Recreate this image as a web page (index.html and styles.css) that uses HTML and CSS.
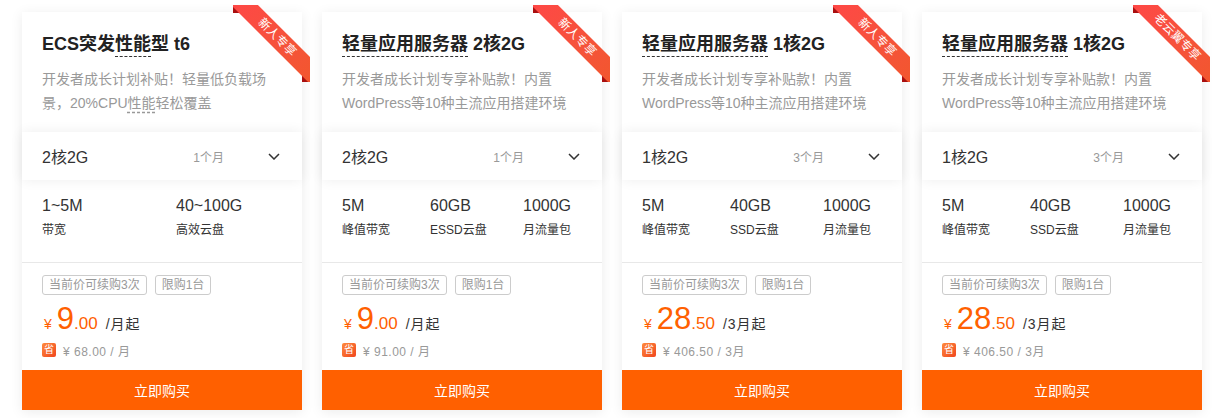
FILE: index.html
```html
<!DOCTYPE html>
<html lang="zh-CN">
<head>
<meta charset="utf-8">
<title>优惠产品</title>
<link rel="stylesheet" href="styles.css">
</head>
<body>
<div class="page">

  <div class="card">
    <div class="ribbon"><span class="fold fold-top"></span><span class="fold fold-bottom"></span><span class="band">新人专享</span></div>
    <div class="head">
      <h3 class="title">ECS突发<span class="dash">性能</span>型 t6</h3>
      <p class="desc">开发者成长计划补贴！轻量低负载场景，20%CPU<span class="dash-light">性能</span>轻松覆盖</p>
    </div>
    <div class="select">
      <span class="sel-name">2核2G</span>
      <span class="period">1个月</span>
      <svg class="chev" width="12" height="7" viewBox="0 0 12 7"><polyline points="1,1 6,6 11,1" fill="none" stroke="#333" stroke-width="1.5"/></svg>
    </div>
    <div class="specs specs-2">
      <div class="spec"><div class="val">1~5M</div><div class="lab">带宽</div></div>
      <div class="spec"><div class="val">40~100G</div><div class="lab">高效云盘</div></div>
    </div>
    <div class="buy">
      <div class="tags"><span class="tag">当前价可续购3次</span><span class="tag">限购1台</span></div>
      <div class="price"><span class="cur">¥</span><span class="int">9</span><span class="dec">.00</span><span class="unit">/月起</span></div>
      <div class="save"><span class="save-icon">省</span><span class="orig">¥ 68.00 / 月</span></div>
    </div>
    <button class="btn">立即购买</button>
  </div>

  <div class="card">
    <div class="ribbon"><span class="fold fold-top"></span><span class="fold fold-bottom"></span><span class="band">新人专享</span></div>
    <div class="head">
      <h3 class="title"><span class="dash">轻量应用服务器</span> 2核2G</h3>
      <p class="desc">开发者成长计划专享补贴款！内置WordPress等10种主流应用搭建环境</p>
    </div>
    <div class="select">
      <span class="sel-name">2核2G</span>
      <span class="period">1个月</span>
      <svg class="chev" width="12" height="7" viewBox="0 0 12 7"><polyline points="1,1 6,6 11,1" fill="none" stroke="#333" stroke-width="1.5"/></svg>
    </div>
    <div class="specs specs-3">
      <div class="spec"><div class="val">5M</div><div class="lab">峰值带宽</div></div>
      <div class="spec"><div class="val">60GB</div><div class="lab">ESSD云盘</div></div>
      <div class="spec"><div class="val">1000G</div><div class="lab">月流量包</div></div>
    </div>
    <div class="buy">
      <div class="tags"><span class="tag">当前价可续购3次</span><span class="tag">限购1台</span></div>
      <div class="price"><span class="cur">¥</span><span class="int">9</span><span class="dec">.00</span><span class="unit">/月起</span></div>
      <div class="save"><span class="save-icon">省</span><span class="orig">¥ 91.00 / 月</span></div>
    </div>
    <button class="btn">立即购买</button>
  </div>

  <div class="card">
    <div class="ribbon"><span class="fold fold-top"></span><span class="fold fold-bottom"></span><span class="band">新人专享</span></div>
    <div class="head">
      <h3 class="title"><span class="dash">轻量应用服务器</span> 1核2G</h3>
      <p class="desc">开发者成长计划专享补贴款！内置WordPress等10种主流应用搭建环境</p>
    </div>
    <div class="select">
      <span class="sel-name">1核2G</span>
      <span class="period">3个月</span>
      <svg class="chev" width="12" height="7" viewBox="0 0 12 7"><polyline points="1,1 6,6 11,1" fill="none" stroke="#333" stroke-width="1.5"/></svg>
    </div>
    <div class="specs specs-3">
      <div class="spec"><div class="val">5M</div><div class="lab">峰值带宽</div></div>
      <div class="spec"><div class="val">40GB</div><div class="lab">SSD云盘</div></div>
      <div class="spec"><div class="val">1000G</div><div class="lab">月流量包</div></div>
    </div>
    <div class="buy">
      <div class="tags"><span class="tag">当前价可续购3次</span><span class="tag">限购1台</span></div>
      <div class="price"><span class="cur">¥</span><span class="int">28</span><span class="dec">.50</span><span class="unit">/3月起</span></div>
      <div class="save"><span class="save-icon">省</span><span class="orig">¥ 406.50 / 3月</span></div>
    </div>
    <button class="btn">立即购买</button>
  </div>

  <div class="card">
    <div class="ribbon"><span class="fold fold-top"></span><span class="fold fold-bottom"></span><span class="band">老云翼专享</span></div>
    <div class="head">
      <h3 class="title"><span class="dash">轻量应用服务器</span> 1核2G</h3>
      <p class="desc">开发者成长计划专享补贴款！内置WordPress等10种主流应用搭建环境</p>
    </div>
    <div class="select">
      <span class="sel-name">1核2G</span>
      <span class="period">3个月</span>
      <svg class="chev" width="12" height="7" viewBox="0 0 12 7"><polyline points="1,1 6,6 11,1" fill="none" stroke="#333" stroke-width="1.5"/></svg>
    </div>
    <div class="specs specs-3">
      <div class="spec"><div class="val">5M</div><div class="lab">峰值带宽</div></div>
      <div class="spec"><div class="val">40GB</div><div class="lab">SSD云盘</div></div>
      <div class="spec"><div class="val">1000G</div><div class="lab">月流量包</div></div>
    </div>
    <div class="buy">
      <div class="tags"><span class="tag">当前价可续购3次</span><span class="tag">限购1台</span></div>
      <div class="price"><span class="cur">¥</span><span class="int">28</span><span class="dec">.50</span><span class="unit">/3月起</span></div>
      <div class="save"><span class="save-icon">省</span><span class="orig">¥ 406.50 / 3月</span></div>
    </div>
    <button class="btn">立即购买</button>
  </div>

</div>
</body>
</html>
```
FILE: styles.css
```css
* { box-sizing: border-box; }

html, body {
  margin: 0;
  background: #fff;
}

body {
  font-family: "Liberation Sans", "Noto Sans CJK SC", sans-serif;
  color: #333;
}

.page {
  display: flex;
  gap: 20px;
  padding: 12px 22px 8px;
}

.card {
  position: relative;
  width: 280px;
  flex: none;
  background: #fff;
  box-shadow: 0 2px 12px rgba(0, 0, 0, 0.08);
  display: flex;
  flex-direction: column;
}

/* ribbon */
.ribbon {
  position: absolute;
  top: -7px;
  right: -8px;
  width: 77px;
  height: 77px;
  overflow: hidden;
  z-index: 2;
}

.fold {
  position: absolute;
  width: 0;
  height: 0;
  border-left: 8px solid #a90f0f;
  border-top: 8px solid transparent;
}

.fold-top { left: 0; top: 0; }
.fold-bottom { left: 69px; top: 69px; }

.band {
  position: absolute;
  left: -17px;
  top: 23px;
  width: 122px;
  height: 19px;
  line-height: 19px;
  text-align: center;
  font-size: 12px;
  color: #fff;
  background: linear-gradient(to right, #ff4747, #f5533a 60%, #f2572c);
  transform: rotate(45deg);
}

/* header */
.head {
  height: 120px;
  padding: 20px 20px 0;
}

.title {
  margin: 0;
  font-size: 18px;
  line-height: 24px;
  font-weight: 600;
  color: #222;
}

.dash {
  padding-bottom: 2px;
  border-bottom: 1px dashed #333;
}

.desc {
  margin: 11px 0 0;
  font-size: 14px;
  line-height: 24px;
  color: #999;
}

.dash-light {
  text-decoration: underline dashed #999;
  text-underline-offset: 4px;
}

/* select row */
.select {
  position: relative;
  z-index: 1;
  height: 48px;
  display: flex;
  align-items: center;
  padding: 0 22px 0 20px;
  background: #fff;
  box-shadow: 0 0 12px rgba(0, 0, 0, 0.07);
}

.sel-name {
  flex: 1;
  font-size: 16px;
  color: #333;
}

.period {
  font-size: 12px;
  color: #999;
  margin-right: 44px;
}

.chev { display: block; }

/* specs */
.specs {
  height: 83px;
  padding: 16px 20px 0;
  border-bottom: 1px solid #e8e8e8;
  display: grid;
  align-content: start;
}

.specs-2 { grid-template-columns: 134px 1fr; }
.specs-3 { grid-template-columns: 88px 93px 1fr; }

.val {
  font-size: 16px;
  line-height: 20px;
  color: #333;
}

.lab {
  margin-top: 5px;
  font-size: 12px;
  line-height: 18px;
  color: #333;
}

/* buy area */
.buy {
  height: 107px;
  padding: 12px 20px 0;
}

.tags {
  display: flex;
  gap: 8px;
}

.tag {
  height: 20px;
  line-height: 18px;
  padding: 0 6px;
  border: 1px solid #ccc;
  border-radius: 3px;
  font-size: 12px;
  color: #999;
}

.price {
  margin-top: 6px;
  height: 36px;
  display: flex;
  align-items: baseline;
  color: #ff6000;
}

.cur {
  font-size: 14px;
  margin: 0 5px 0 2px;
}

.int {
  font-size: 31px;
  line-height: 36px;
}

.dec {
  font-size: 17px;
}

.unit {
  margin-left: 8px;
  font-size: 14px;
  color: #333;
  letter-spacing: 1px;
}

.save {
  margin-top: 6px;
  height: 14px;
  display: flex;
  align-items: center;
}

.save-icon {
  width: 14px;
  height: 14px;
  border-radius: 2px;
  background: linear-gradient(135deg, #ff8a3d, #f0461e);
  color: #fff;
  font-size: 10px;
  line-height: 14px;
  text-align: center;
}

.orig {
  margin-left: 7px;
  font-size: 12px;
  color: #999;
  letter-spacing: 0.5px;
}

.btn {
  display: block;
  width: 100%;
  height: 40px;
  border: 0;
  margin: 0;
  padding: 0;
  background: #ff6000;
  color: #fff;
  font-family: "Liberation Sans", "Noto Sans CJK SC", sans-serif;
  font-size: 14px;
  cursor: pointer;
}
```
